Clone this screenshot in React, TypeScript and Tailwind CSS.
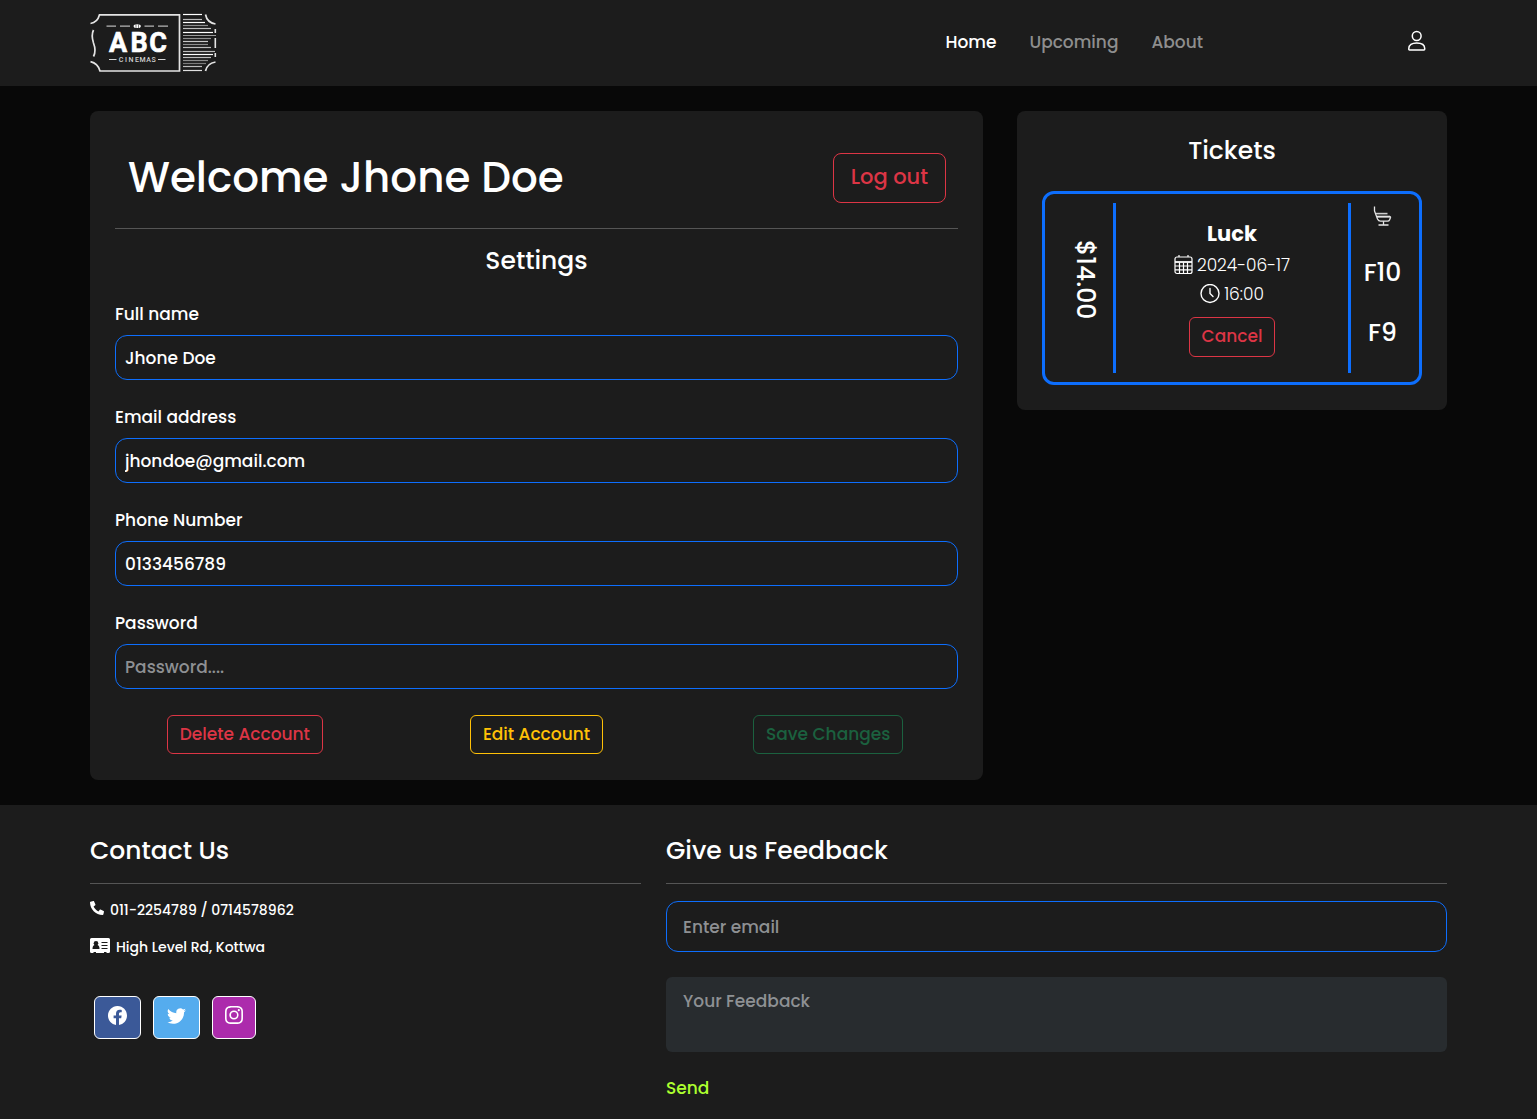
import { useState } from "react";
import type { ReactNode } from "react";
import { BsFacebook, BsTwitter, BsInstagram } from "react-icons/bs";
import { FaPhone } from "react-icons/fa";

function Logo() {
  const stubLines: [number, number, string][] = [
    [14, 202, "#ffffff"],
    [19, 202, "#bdbdbd"],
    [22, 205, "#ffffff"],
    [25, 208, "#8e8e8e"],
    [28, 211, "#bdbdbd"],
    [32, 213, "#ffffff"],
    [35, 216, "#9a9a9a"],
    [38, 211, "#8e8e8e"],
    [41, 208, "#c8c8c8"],
    [44, 208, "#8e8e8e"],
    [47, 211, "#bdbdbd"],
    [51, 215, "#bdbdbd"],
    [54, 213, "#ffffff"],
    [57, 211, "#bdbdbd"],
    [60, 208, "#8e8e8e"],
    [63, 206, "#7c7c7c"],
    [66, 202, "#bdbdbd"],
    [70, 202, "#e0e0e0"],
  ];
  return (
    <svg width="128" height="60" viewBox="90 13 128 60" fill="none" role="img" aria-label="ABC Cinemas">
      <path
        d="M90.500 23.500 Q97.500 22.500 99.500 14.800 H179.500 V71 H100 Q98 63.500 90.500 61.700"
        stroke="#e4e4e4"
        strokeWidth="1.700"
      />
      <path d="M93.500 30 Q91 35 93.500 43 Q96.500 51 93.500 56.500" stroke="#e4e4e4" strokeWidth="1.700" />
      {stubLines.map(([y, end, color]) => (
        <path key={y} d={`M183 ${y + 0.5} H${end}`} stroke={color} strokeWidth="1.200" />
      ))}
      <path d="M205.500 14.500 Q207 22.500 215.500 24 M205.500 71 Q207 63.500 215.500 62" stroke="#e4e4e4" strokeWidth="1.700" />
      <path d="M215.300 29 V33 M215.300 38 V48 M215.300 53 V57" stroke="#e4e4e4" strokeWidth="1.600" />
      <path d="M106.500 26.200 H116 M120 26.200 H130 M144.500 26.200 H154 M158 26.200 H168" stroke="#b5b5b5" strokeWidth="1.200" />
      <ellipse cx="137.200" cy="26.200" rx="3.600" ry="1.900" fill="#fff" />
      <path d="M136 24.500 V28 M138.500 24.500 V28" stroke="#444" strokeWidth="0.700" />
      <path d="M109 59.500 H116.500 M158 59.500 H165.500" stroke="#d5d5d5" strokeWidth="1.200" />
      <g fill="#fff" textAnchor="middle">
        <g
          fontSize="27"
          fontFamily="'Liberation Sans Narrow', 'Roboto', sans-serif"
          fontWeight="700"
          stroke="#fff"
          strokeWidth="0.600"
        >
          <text x="118" y="52">A</text>
          <text x="139" y="52">B</text>
          <text x="158" y="52">C</text>
        </g>
        <g fontSize="7" fontFamily="'Roboto', sans-serif" fontWeight="500" fill="#d0d0d0">
          <text x="121" y="62">C</text>
          <text x="126" y="62">I</text>
          <text x="131" y="62">N</text>
          <text x="137" y="62">E</text>
          <text x="142.500" y="62">M</text>
          <text x="148.500" y="62">A</text>
          <text x="153.500" y="62">S</text>
        </g>
      </g>
    </svg>
  );
}

function UserIcon() {
  return (
    <svg width="20" height="22" viewBox="0 0 20 22" fill="none" stroke="#fff" strokeWidth="1.500">
      <circle cx="9.700" cy="6" r="4.400" />
      <path d="M1.800 19.300 V18.500 C1.800 14.800 4.800 12.900 9.700 12.900 C14.600 12.900 17.700 14.800 17.700 18.500 V19.300 Q17.700 20 17 20 H2.500 Q1.800 20 1.800 19.300 Z" />
    </svg>
  );
}

function SeatIcon() {
  return (
    <svg width="20" height="21" viewBox="0 0 20 21" fill="none" stroke="#e6e6e6" strokeWidth="1.300">
      <path d="M1.500 0.500 V5 L4.500 13 Q5.500 15.200 7.500 15.200 H14.500 Q16 15.200 16.500 14 L17.500 11.500 Q17.700 10.600 16.500 10.600 H4" />
      <path d="M3 7.600 H14.500" strokeWidth="1.600" stroke="#cfcfcf" />
      <path d="M4 10.600 H17" strokeWidth="1.800" />
      <path d="M10.500 15.200 V18.500 M5.500 19 H15.500" />
    </svg>
  );
}

function CalendarIcon() {
  return (
    <svg width="19" height="20" viewBox="0 0 19 20" fill="none" stroke="#fff" strokeWidth="1.200">
      <rect x="1" y="2" width="17" height="16.500" rx="2" />
      <path d="M5 0 V2 M14 0 V2" />
      <path d="M1 7 H18" strokeWidth="1.800" />
      <path d="M1 11 H18 M1 14.800 H18 M5.500 7.500 V18.500 M9.500 7.500 V18.500 M13.500 7.500 V18.500" />
    </svg>
  );
}

function ClockIcon() {
  return (
    <svg width="20" height="20" viewBox="0 0 20 20" fill="none" stroke="#fff" strokeWidth="1.400" strokeLinecap="round">
      <circle cx="10" cy="9.500" r="9" />
      <path d="M10 4.500 V9.500 L13 12.500" />
    </svg>
  );
}

function AddressCardIcon() {
  return (
    <svg width="20" height="16" viewBox="0 0 20 16">
      <path
        fill="#fff"
        d="M1.500 0 H18.500 Q20 0 20 1.500 V13.500 Q20 15 18.500 15 H16.500 V14 H14 V15 H6 V14 H3.500 V15 H1.500 Q0 15 0 13.500 V1.500 Q0 0 1.500 0 Z"
      />
      <circle cx="6" cy="5.300" r="2.300" fill="#1c1c1c" />
      <path d="M2.500 11 Q2.500 7.500 4.500 7 H7.500 Q9.500 7.500 9.500 11 Z" fill="#1c1c1c" />
      <path d="M11.500 4.500 H17.500 M11.500 7.500 H17.500 M11.500 10.500 H17.500" stroke="#1c1c1c" strokeWidth="1.200" />
    </svg>
  );
}

function Field(props: {
  id: string;
  label: string;
  type: string;
  value?: string;
  placeholder?: string;
}) {
  return (
    <div>
      <label htmlFor={props.id} className="mb-2 block leading-[26px]">
        {props.label}
      </label>
      <input
        id={props.id}
        type={props.type}
        defaultValue={props.value}
        placeholder={props.placeholder}
        className="block h-[45px] w-full rounded-xl border border-[#0d6efd] bg-transparent px-[9px] text-white outline-none placeholder:text-[#8e9093]"
      />
    </div>
  );
}

function SocialLink(props: { label: string; className: string; children: ReactNode }) {
  return (
    <a
      href="#"
      aria-label={props.label}
      className={"flex h-[43px] justify-center rounded-md border border-white pt-[9px] " + props.className}
    >
      {props.children}
    </a>
  );
}

export default function App() {
  const [feedback, setFeedback] = useState("");
  return (
    <div className="min-h-screen bg-[#080808] font-['Poppins','Inter',sans-serif] text-[17px] font-medium text-white">
      <header className="flex h-[86px] items-center bg-[#1c1c1c] px-[90px]">
        <a href="#">
          <Logo />
        </a>
        <nav className="ml-auto flex gap-[33px] text-[#8e8e8e]">
          <a href="#" className="text-white">Home</a>
          <a href="#">Upcoming</a>
          <a href="#">About</a>
        </nav>
        <button type="button" aria-label="Profile" className="mr-5 ml-[204px] pb-1">
          <UserIcon />
        </button>
      </header>

      <main className="grid grid-cols-[893fr_430fr] items-start gap-[34px] px-[90px] py-[25px]">
        <section className="rounded-lg bg-[#1c1c1c] px-[25px] pb-[26px]">
          <div className="flex items-center justify-between border-b border-[#555] pt-[42px] pr-3 pb-[25px] pl-[13px]">
            <h1 className="text-[42px] leading-[50px]">Welcome Jhone Doe</h1>
            <button type="button" className="h-[50px] rounded-lg border border-[#dc3545] px-[17px] pb-[2px] text-[21px] text-[#dc3545]">
              Log out
            </button>
          </div>
          <h2 className="mt-4 text-center text-[25px] leading-8">Settings</h2>
          <form>
            <div className="mt-6 grid gap-6">
              <Field id="name" label="Full name" type="text" value="Jhone Doe" />
              <Field id="email" label="Email address" type="email" value="jhondoe@gmail.com" />
              <Field id="phone" label="Phone Number" type="tel" value="0133456789" />
              <Field id="password" label="Password" type="password" placeholder="Password...." />
            </div>
            <div className="-mx-4 mt-[26px] grid grid-cols-3 justify-items-center">
              <button type="button" className="h-[39px] rounded-md border border-[#dc3545] px-3 text-[#dc3545]">
                Delete Account
              </button>
              <button type="button" className="h-[39px] rounded-md border border-[#ffc107] px-3 text-[#ffc107]">
                Edit Account
              </button>
              <button type="submit" disabled className="h-[39px] rounded-md border border-[#1b613f] px-3 text-[#1b613f]">
                Save Changes
              </button>
            </div>
          </form>
        </section>

        <section className="rounded-lg bg-[#1c1c1c] p-[25px]">
          <h2 className="mb-[25px] text-center text-[25px] leading-[30px]">Tickets</h2>
          <article className="flex rounded-xl border-[3px] border-[#0d6efd] py-[9px]">
            <div className="flex w-[71px] items-center justify-center border-r-[3px] border-[#0d6efd] pb-4 pl-3 text-[25px] leading-[30px]">
              <span className="[writing-mode:vertical-rl]">$14.00</span>
            </div>
            <div className="flex flex-1 flex-col items-center pt-4 pb-4 font-light">
              <h3 className="text-[21px] leading-[30px] font-bold">Luck</h3>
              <p className="flex items-center gap-1 leading-8">
                <CalendarIcon /> 2024-06-17
              </p>
              <p className="flex items-center gap-1 leading-[26px]">
                <ClockIcon /> 16:00
              </p>
              <button type="button" className="mt-[10px] h-10 rounded-md border border-[#dc3545] px-3 font-medium text-[#dc3545]">
                Cancel
              </button>
            </div>
            <div className="flex w-[71px] flex-col items-center border-l-[3px] border-[#0d6efd] pt-[3px] pr-[5px] text-[25px] leading-[30px]">
              <SeatIcon />
              <span className="mt-[31px]">F10</span>
              <span className="mt-[30px]">F9</span>
            </div>
          </article>
        </section>
      </main>

      <footer className="grid grid-cols-[551fr_781fr] gap-[25px] bg-[#1c1c1c] px-[90px] pt-[31px] pb-[18px]">
        <section>
          <h2 className="border-b border-[#555] pb-[17px] text-[25px] leading-[30px]">Contact Us</h2>
          <p className="mt-4 flex items-center gap-[6px] text-[14px] leading-5">
            <FaPhone className="mb-1 size-[14px] -scale-x-100" /> 011-2254789 / 0714578962
          </p>
          <p className="mt-[17px] flex items-center gap-[6px] text-[14px] leading-5">
            <span className="pb-[3px]">
              <AddressCardIcon />
            </span>
            High Level Rd, Kottwa
          </p>
          <div className="mt-[39px] ml-1 flex gap-3">
            <SocialLink label="Facebook" className="w-[47px] bg-[#3b5998]">
              <BsFacebook className="size-[19px]" />
            </SocialLink>
            <SocialLink label="Twitter" className="w-[47px] bg-[#55acee]">
              <BsTwitter className="size-[19px]" />
            </SocialLink>
            <SocialLink label="Instagram" className="w-11 bg-[#ac2bac]">
              <BsInstagram className="size-[18px]" />
            </SocialLink>
          </div>
        </section>
        <section>
          <h2 className="border-b border-[#555] pb-[17px] text-[25px] leading-[30px]">Give us Feedback</h2>
          <form className="mt-[17px]">
            <input
              type="email"
              aria-label="Enter email"
              placeholder="Enter email"
              className="block h-[51px] w-full rounded-xl border border-[#0d6efd] bg-transparent px-4 outline-none placeholder:text-[#8e9093]"
            />
            <textarea
              aria-label="Your Feedback"
              placeholder="Your Feedback"
              value={feedback}
              onChange={(e) => setFeedback(e.target.value)}
              className="mt-[25px] block h-[75px] w-full resize-none rounded-md bg-[#282c2f] px-[17px] py-3 leading-6 outline-none placeholder:text-[#8e9194]"
            />
            <button type="submit" className="mt-6 leading-6 text-[#adff2f]">
              Send
            </button>
          </form>
        </section>
      </footer>
    </div>
  );
}
